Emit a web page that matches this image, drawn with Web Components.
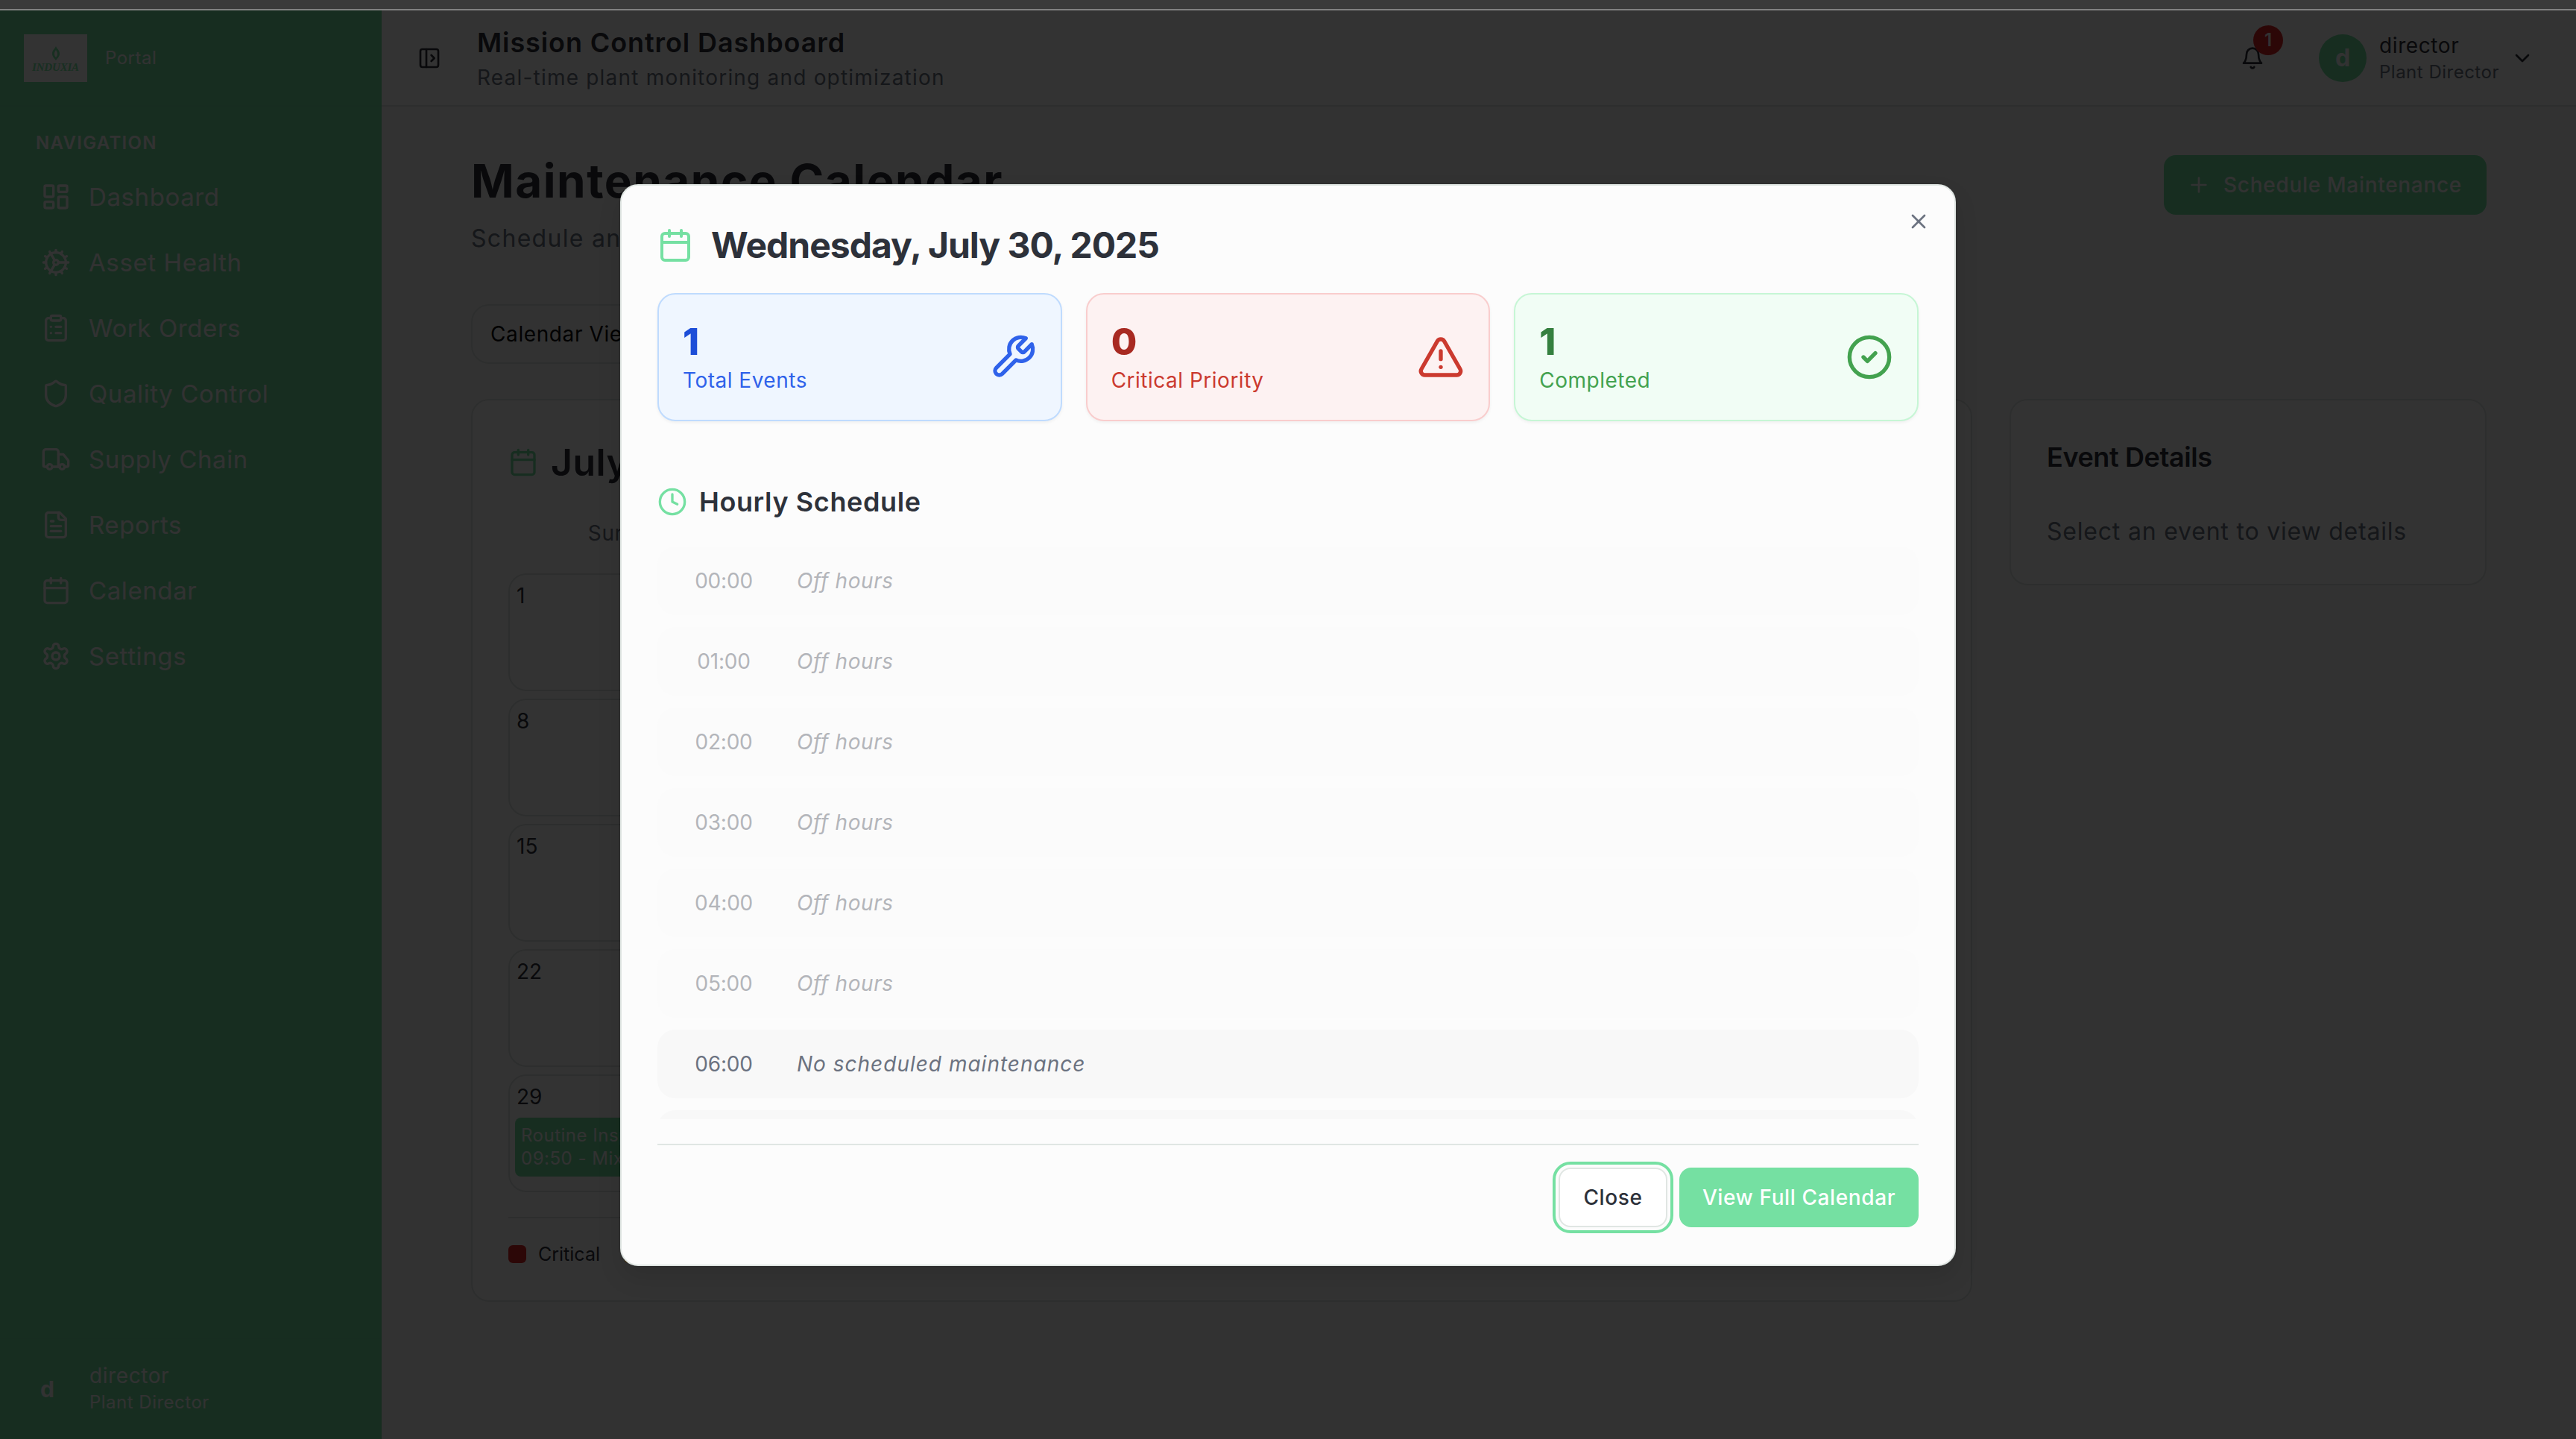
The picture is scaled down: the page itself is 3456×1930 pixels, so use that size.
<!DOCTYPE html>
<html lang="en">
<head>
<meta charset="utf-8">
<title>Mission Control Dashboard</title>
<style>
    html, body { margin: 0; height: 100%; background: #fafafa; overflow: hidden; }
    body { font-family: Inter, "Liberation Sans", sans-serif; color: #2d313a; }
</style>
</head>
<body>
<app-shell></app-shell>
<script>
const ICONS = {
    'layout-dashboard': '<rect x="3" y="3" width="7" height="9" rx="1"/><rect x="14" y="3" width="7" height="5" rx="1"/><rect x="14" y="12" width="7" height="9" rx="1"/><rect x="3" y="16" width="7" height="5" rx="1"/>',
    'cog': '<path d="M12 20a8 8 0 1 0 0-16 8 8 0 0 0 0 16Z"/><path d="M12 14a2 2 0 1 0 0-4 2 2 0 0 0 0 4Z"/><path d="M12 2v2"/><path d="M12 22v-2"/><path d="m17 20.66-1-1.73"/><path d="M11 10.27 7 3.34"/><path d="m20.66 17-1.73-1"/><path d="m3.34 7 1.73 1"/><path d="M14 12h8"/><path d="M2 12h2"/><path d="m20.66 7-1.73 1"/><path d="m3.34 17 1.73-1"/><path d="m17 3.34-1 1.73"/><path d="m11 13.73-4 6.93"/>',
    'clipboard-list': '<rect x="8" y="2" width="8" height="4" rx="1"/><path d="M16 4h2a2 2 0 0 1 2 2v14a2 2 0 0 1-2 2H6a2 2 0 0 1-2-2V6a2 2 0 0 1 2-2h2"/><path d="M12 11h4"/><path d="M12 16h4"/><path d="M8 11h.01"/><path d="M8 16h.01"/>',
    'shield': '<path d="M20 13c0 5-3.5 7.5-7.66 8.95a1 1 0 0 1-.67-.01C7.5 20.5 4 18 4 13V6a1 1 0 0 1 1-1c2 0 4.5-1.2 6.24-2.72a1.17 1.17 0 0 1 1.52 0C14.51 3.81 17 5 19 5a1 1 0 0 1 1 1z"/>',
    'truck': '<path d="M14 18V6a2 2 0 0 0-2-2H4a2 2 0 0 0-2 2v11a1 1 0 0 0 1 1h2"/><path d="M15 18H9"/><path d="M19 18h2a1 1 0 0 0 1-1v-3.65a1 1 0 0 0-.22-.624l-3.48-4.35A1 1 0 0 0 17.52 8H14"/><circle cx="17" cy="18" r="2"/><circle cx="7" cy="18" r="2"/>',
    'file-text': '<path d="M15 2H6a2 2 0 0 0-2 2v16a2 2 0 0 0 2 2h12a2 2 0 0 0 2-2V7Z"/><path d="M14 2v4a2 2 0 0 0 2 2h4"/><path d="M10 9H8"/><path d="M16 13H8"/><path d="M16 17H8"/>',
    'calendar': '<path d="M8 2v4"/><path d="M16 2v4"/><rect x="3" y="4" width="18" height="18" rx="2"/><path d="M3 10h18"/>',
    'settings': '<path d="M12.22 2h-.44a2 2 0 0 0-2 2v.18a2 2 0 0 1-1 1.73l-.43.25a2 2 0 0 1-2 0l-.15-.08a2 2 0 0 0-2.73.73l-.22.38a2 2 0 0 0 .73 2.73l.15.1a2 2 0 0 1 1 1.72v.51a2 2 0 0 1-1 1.74l-.15.09a2 2 0 0 0-.73 2.73l.22.38a2 2 0 0 0 2.73.73l.15-.08a2 2 0 0 1 2 0l.43.25a2 2 0 0 1 1 1.73V20a2 2 0 0 0 2 2h.44a2 2 0 0 0 2-2v-.18a2 2 0 0 1 1-1.73l.43-.25a2 2 0 0 1 2 0l.15.08a2 2 0 0 0 2.73-.73l.22-.39a2 2 0 0 0-.73-2.73l-.15-.08a2 2 0 0 1-1-1.74v-.5a2 2 0 0 1 1-1.74l.15-.09a2 2 0 0 0 .73-2.73l-.22-.38a2 2 0 0 0-2.73-.73l-.15.08a2 2 0 0 1-2 0l-.43-.25a2 2 0 0 1-1-1.73V4a2 2 0 0 0-2-2z"/><circle cx="12" cy="12" r="3"/>',
    'panel-left-open': '<rect x="3" y="3" width="18" height="18" rx="2"/><path d="M9 3v18"/><path d="m14 9 3 3-3 3"/>',
    'bell': '<path d="M6 8a6 6 0 0 1 12 0c0 7 3 9 3 9H3s3-2 3-9"/><path d="M10.3 21a1.94 1.94 0 0 0 3.4 0"/>',
    'chevron-down': '<path d="m6 9 6 6 6-6"/>',
    'plus': '<path d="M5 12h14"/><path d="M12 5v14"/>',
    'x': '<path d="M18 6 6 18"/><path d="m6 6 12 12"/>',
    'wrench': '<path d="M14.7 6.3a1 1 0 0 0 0 1.4l1.6 1.6a1 1 0 0 0 1.4 0l3.77-3.77a6 6 0 0 1-7.94 7.94l-6.91 6.91a2.12 2.12 0 0 1-3-3l6.91-6.91a6 6 0 0 1 7.94-7.94l-3.76 3.76z"/>',
    'triangle-alert': '<path d="m21.73 18-8-14a2 2 0 0 0-3.48 0l-8 14A2 2 0 0 0 4 21h16a2 2 0 0 0 1.73-3"/><path d="M12 9v4"/><path d="M12 17h.01"/>',
    'circle-check': '<circle cx="12" cy="12" r="10"/><path d="m9 12 2 2 4-4"/>',
    'clock': '<circle cx="12" cy="12" r="10"/><polyline points="12 6 12 12 16 14"/>'
};

class UiIcon extends HTMLElement {
    connectedCallback() {
        const size = this.getAttribute('size') || 40;
        const name = this.getAttribute('name');
        this.attachShadow({ mode: 'open' });
        this.shadowRoot.innerHTML = `
            <style>
                :host { display: inline-flex; flex: none; width: ${size}px; height: ${size}px; }
                svg { display: block; }
            </style>
            <svg xmlns="http://www.w3.org/2000/svg" width="${size}" height="${size}" viewBox="0 0 24 24" fill="none"
                stroke="currentColor" stroke-width="2" stroke-linecap="round" stroke-linejoin="round">${ICONS[name]}</svg>
        `;
    }
}
customElements.define('ui-icon', UiIcon);

class NavItem extends HTMLElement {
    connectedCallback() {
        this.attachShadow({ mode: 'open' });
        this.shadowRoot.innerHTML = `
            <style>
                :host { display: flex; align-items: center; gap: 24px; height: 88px; padding-left: 55px; color: #fafafa; }
                span { font-size: 33px; letter-spacing: 0.6px; }
            </style>
            <ui-icon name="${this.getAttribute('icon')}" size="40"></ui-icon>
            <span><slot></slot></span>
        `;
    }
}
customElements.define('nav-item', NavItem);

class SideBar extends HTMLElement {
    connectedCallback() {
        this.attachShadow({ mode: 'open' });
        this.shadowRoot.innerHTML = `
            <style>
                :host { display: flex; flex-direction: column; flex: none; width: 512px; background: #75e0a2; color: #fafafa; }
                .brand { display: flex; align-items: center; gap: 24px; height: 129px; padding: 0 32px; box-sizing: border-box; border-bottom: 2px solid #72dc9e; }
                .logo { width: 85px; height: 64px; background: #fff; display: flex; flex-direction: column; align-items: center; justify-content: center; color: #7ae8a6; }
                .logo svg { display: block; margin-top: 4px; }
                .logo b { font: italic 700 15px/16px "Liberation Serif", serif; letter-spacing: -0.2px; }
                .portal { font-size: 24px; letter-spacing: 0.5px; }
                .label { font-size: 24px; font-weight: 600; letter-spacing: 1.3px; padding: 34px 0 13px 48px; line-height: 30px; }
                nav { flex: 1; }
                .foot { display: flex; align-items: center; gap: 47px; height: 136px; padding: 0 0 0 54px; box-sizing: border-box; border-top: 2px solid #72dc9e; }
                .foot b { font-size: 30px; font-weight: 700; }
                .who { display: flex; flex-direction: column; }
                .who span { font-size: 28px; line-height: 36px; letter-spacing: 0.6px; }
                .who small { font-size: 24px; line-height: 36px; letter-spacing: 0.5px; }
            </style>
            <div class="brand">
                <div class="logo">
                    <svg width="18" height="20" viewBox="0 0 18 20" fill="currentColor"><path d="M9 0c1 3 5 5 5 10 0 4-3 6-5 9-2-3-5-5-5-9 0-5 4-7 5-10zm0 5c-1 2-2 3-2 5s1 4 2 5c1-1 2-3 2-5s-1-3-2-5z"/></svg>
                    <b>INDUXIA</b>
                </div>
                <span class="portal">Portal</span>
            </div>
            <div class="label">NAVIGATION</div>
            <nav>
                <nav-item icon="layout-dashboard">Dashboard</nav-item>
                <nav-item icon="cog">Asset Health</nav-item>
                <nav-item icon="clipboard-list">Work Orders</nav-item>
                <nav-item icon="shield">Quality Control</nav-item>
                <nav-item icon="truck">Supply Chain</nav-item>
                <nav-item icon="file-text">Reports</nav-item>
                <nav-item icon="calendar">Calendar</nav-item>
                <nav-item icon="settings">Settings</nav-item>
            </nav>
            <div class="foot">
                <b>d</b>
                <div class="who"><span>director</span><small>Plant Director</small></div>
            </div>
        `;
    }
}
customElements.define('side-bar', SideBar);

class TopBar extends HTMLElement {
    connectedCallback() {
        this.attachShadow({ mode: 'open' });
        this.shadowRoot.innerHTML = `
            <style>
                :host { display: flex; align-items: center; flex: none; height: 129px; box-sizing: border-box; padding: 0 56px 0 48px; background: #fff; border-bottom: 2px solid #e0e6e3; }
                .titles { flex: 1; margin-left: 48px; }
                h1 { margin: 0; font-size: 36px; line-height: 50px; font-weight: 600; letter-spacing: 0.9px; }
                p { margin: 2px 0 0; font-size: 28px; line-height: 40px; letter-spacing: 1.2px; color: #6b7280; }
                .bell { position: relative; display: flex; margin-right: 73px; }
                .badge { position: absolute; left: 17px; top: -28px; width: 40px; height: 40px; border-radius: 50%; background: #dc2626; color: #fafafa; font-size: 24px; font-weight: 600; display: flex; align-items: center; justify-content: center; }
                .avatar { width: 64px; height: 64px; border-radius: 50%; background: #75e0a2; color: #fafafa; font-size: 32px; font-weight: 700; display: flex; align-items: center; justify-content: center; }
                .who { display: flex; flex-direction: column; width: 176px; margin-left: 17px; }
                .who span { font-size: 28px; line-height: 38px; letter-spacing: 0.6px; }
                .who small { font-size: 24px; line-height: 34px; letter-spacing: 0.5px; color: #6b7280; }
            </style>
            <ui-icon name="panel-left-open" size="32"></ui-icon>
            <div class="titles">
                <h1>Mission Control Dashboard</h1>
                <p>Real-time plant monitoring and optimization</p>
            </div>
            <div class="bell"><ui-icon name="bell" size="32"></ui-icon><span class="badge">1</span></div>
            <div class="avatar">d</div>
            <div class="who"><span>director</span><small>Plant Director</small></div>
            <ui-icon name="chevron-down" size="32"></ui-icon>
        `;
    }
}
customElements.define('top-bar', TopBar);

class CalendarCard extends HTMLElement {
    connectedCallback() {
        const names = ['Sun', 'Mon', 'Tue', 'Wed', 'Thu', 'Fri', 'Sat'];
        let cells = '';
        for (let d = 1; d <= 35; d++) {
            const chip = d === 29 || d === 30
                ? `<div class="chip"><div>Routine Inspection</div><div>09:50 - Mixer 2</div></div>` : '';
            cells += `<div class="cell"><span class="num">${d <= 31 ? d : ''}</span>${chip}</div>`;
        }
        this.attachShadow({ mode: 'open' });
        this.shadowRoot.innerHTML = `
            <style>
                :host { display: block; box-sizing: border-box; height: 1211px; padding: 48px; border: 2px solid #e0e6e3; border-radius: 24px; background: #fff; }
                .head { display: flex; align-items: center; gap: 17px; height: 70px; color: #75e0a2; }
                .head b { font-size: 50px; font-weight: 600; letter-spacing: 0.5px; color: #2d313a; }
                .days, .grid { display: grid; grid-template-columns: repeat(7, 1fr); column-gap: 8px; }
                .days { margin-top: 40px; height: 40px; line-height: 40px; text-align: center; font-size: 28px; letter-spacing: 0.6px; color: #6b7280; }
                .grid { margin-top: 34px; row-gap: 10px; }
                .cell { box-sizing: border-box; height: 158px; padding: 10px 8px; border: 2px solid #e0e6e3; border-radius: 24px; overflow: hidden; }
                .num { display: block; font-size: 28px; line-height: 36px; padding-left: 1px; }
                .chip { margin-top: 10px; margin-left: -1px; height: 79px; padding: 8px; box-sizing: border-box; background: #75e0a2; color: #fafafa; border-radius: 8px; font-size: 24px; line-height: 31px; letter-spacing: 0.5px; white-space: nowrap; overflow: hidden; }
                .legend { display: flex; gap: 32px; margin-top: 33px; padding-top: 36px; border-top: 2px solid #e0e6e3; font-size: 25px; line-height: 24px; }
                .legend span { display: flex; align-items: center; gap: 16px; }
                .legend i { width: 24px; height: 24px; border-radius: 6px; }
            </style>
            <div class="head"><ui-icon name="calendar" size="40"></ui-icon><b>July 2025</b></div>
            <div class="days">${names.map(n => `<span>${n}</span>`).join('')}</div>
            <div class="grid">${cells}</div>
            <div class="legend">
                <span><i style="background:#dc2626"></i>Critical</span>
                <span><i style="background:#f59e0b"></i>High</span>
                <span><i style="background:#3b82f6"></i>Medium</span>
                <span><i style="background:#75e0a2"></i>Low</span>
            </div>
        `;
    }
}
customElements.define('calendar-card', CalendarCard);

class CalendarPage extends HTMLElement {
    connectedCallback() {
        this.attachShadow({ mode: 'open' });
        this.shadowRoot.innerHTML = `
            <style>
                :host { display: block; flex: 1; padding: 60px 120px 0 120px; background: #fafafa; }
                .top { display: flex; justify-content: space-between; align-items: flex-start; height: 205px; }
                h2 { margin: 0; font-size: 62px; line-height: 80px; font-weight: 700; letter-spacing: 1.5px; }
                p { margin: 13px 0 0; font-size: 32px; line-height: 48px; letter-spacing: 1.3px; color: #6b7280; }
                .add { display: flex; align-items: center; gap: 17px; margin-top: 5px; height: 80px; padding: 0 33px 0 31px; background: #75e0a2; color: #fafafa; border-radius: 16px; font-size: 28px; font-weight: 500; letter-spacing: 0.7px; }
                .tabs { box-sizing: border-box; width: 760px; height: 80px; padding: 0 24px; display: flex; align-items: center; gap: 32px; border: 2px solid #e0e6e3; border-radius: 24px; font-size: 28px; letter-spacing: 0.6px; color: #0a0a0a; }
                .cols { display: grid; grid-template-columns: 2014px 640px; gap: 50px; margin-top: 47px; align-items: start; }
                .details { box-sizing: border-box; height: 250px; padding: 49px 48px; border: 2px solid #e0e6e3; border-radius: 24px; background: #fff; }
                h3 { margin: 0; font-size: 36px; line-height: 54px; font-weight: 600; letter-spacing: -0.4px; }
                .details p { margin: 51px 0 0; font-size: 32px; line-height: 44px; letter-spacing: 0.8px; }
            </style>
            <div class="top">
                <div>
                    <h2>Maintenance Calendar</h2>
                    <p>Schedule and manage maintenance activities</p>
                </div>
                <div class="add"><ui-icon name="plus" size="32"></ui-icon>Schedule Maintenance</div>
            </div>
            <div class="tabs"><span>Calendar View</span></div>
            <div class="cols">
                <calendar-card></calendar-card>
                <div class="details">
                    <h3>Event Details</h3>
                    <p>Select an event to view details</p>
                </div>
            </div>
        `;
    }
}
customElements.define('calendar-page', CalendarPage);

class StatCard extends HTMLElement {
    connectedCallback() {
        const a = name => this.getAttribute(name);
        this.attachShadow({ mode: 'open' });
        this.shadowRoot.innerHTML = `
            <style>
                :host { display: flex; align-items: center; justify-content: space-between; padding: 32px; border: 2px solid ${a('line')}; border-radius: 24px; background: ${a('bg')}; box-shadow: 0 2px 4px rgba(0,0,0,.05); }
                b { display: block; font-size: 50px; line-height: 62px; font-weight: 800; color: ${a('strong')}; }
                span { display: block; font-size: 28px; line-height: 42px; letter-spacing: 0.5px; color: ${a('soft')}; }
                ui-icon { color: ${a('soft')}; }
            </style>
            <div><b>${a('value')}</b><span>${a('label')}</span></div>
            <ui-icon name="${a('icon')}" size="64"></ui-icon>
        `;
    }
}
customElements.define('stat-card', StatCard);

class HourRow extends HTMLElement {
    connectedCallback() {
        const off = this.hasAttribute('off');
        this.attachShadow({ mode: 'open' });
        this.shadowRoot.innerHTML = `
            <style>
                :host { display: flex; align-items: center; flex: none; box-sizing: border-box; height: 92px; padding: 0 32px; border-radius: 24px; background: ${off ? '#fbfbfb' : '#f8f8f8'}; font-size: 28px; color: ${off ? '#b3b5ba' : '#6b7280'}; }
                .time { width: 112px; text-align: center; margin-right: 43px; letter-spacing: -0.2px; padding-left: 2px; box-sizing: border-box; }
                em { font-style: italic; letter-spacing: ${off ? 0.6 : 1}px; }
            </style>
            <span class="time">${this.getAttribute('time')}</span>
            <em><slot></slot></em>
        `;
    }
}
customElements.define('hour-row', HourRow);

class DayModal extends HTMLElement {
    connectedCallback() {
        const rows = [];
        for (let h = 0; h < 24; h++) {
            const t = String(h).padStart(2, '0') + ':00';
            const off = h < 6 || h > 20;
            rows.push(`<hour-row time="${t}"${off ? ' off' : ''}>${off ? 'Off hours' : 'No scheduled maintenance'}</hour-row>`);
        }
        this.attachShadow({ mode: 'open' });
        this.shadowRoot.innerHTML = `
            <style>
                :host { display: block; position: relative; box-sizing: border-box; width: 1792px; padding: 48px; background: #fcfcfc; border: 2px solid #e0e6e3; border-radius: 24px; box-shadow: 0 16px 32px rgba(0,0,0,.1); color: #2d313a; }
                .close { position: absolute; top: 32px; right: 32px; color: #6b7280; }
                .title { display: flex; align-items: center; gap: 24px; height: 64px; color: #75e0a2; }
                h2 { margin: 0; font-size: 48px; font-weight: 700; letter-spacing: -1px; color: #2d313a; }
                .stats { display: grid; grid-template-columns: repeat(3, 1fr); gap: 32px; margin-top: 32px; }
                .hourly { display: flex; align-items: center; gap: 16px; height: 56px; margin-top: 80px; color: #75e0a2; }
                h3 { margin: 0; font-size: 36px; font-weight: 600; letter-spacing: 0.6px; color: #2d313a; }
                .list { display: flex; flex-direction: column; gap: 16px; height: 768px; margin-top: 32px; overflow: hidden; }
                .foot { display: flex; justify-content: flex-end; gap: 16px; margin-top: 33px; padding: 30px 0 2px; border-top: 2px solid #e0e6e3; }
                .btn { display: flex; align-items: center; justify-content: center; box-sizing: border-box; height: 80px; border-radius: 16px; font-size: 28px; font-weight: 500; letter-spacing: 0.6px; }
                .ghost { width: 146px; background: #fff; border: 2px solid #e0e6e3; outline: 4px solid #75e0a2; outline-offset: 4px; }
                .solid { width: 321px; background: #75e0a2; color: #fff; }
            </style>
            <ui-icon class="close" name="x" size="32"></ui-icon>
            <div class="title"><ui-icon name="calendar" size="48"></ui-icon><h2>Wednesday, July 30, 2025</h2></div>
            <div class="stats">
                <stat-card value="1" label="Total Events" icon="wrench" bg="#eff6ff" line="#bfdbfe" strong="#1d4ed8" soft="#2f62ea"></stat-card>
                <stat-card value="0" label="Critical Priority" icon="triangle-alert" bg="#fdf2f2" line="#f9cdcd" strong="#a82a22" soft="#cb3a2f"></stat-card>
                <stat-card value="1" label="Completed" icon="circle-check" bg="#f1fdf5" line="#c6f6d5" strong="#35803f" soft="#43a24f"></stat-card>
            </div>
            <div class="hourly"><ui-icon name="clock" size="40"></ui-icon><h3>Hourly Schedule</h3></div>
            <div class="list">${rows.join('')}</div>
            <div class="foot">
                <div class="btn ghost">Close</div>
                <div class="btn solid">View Full Calendar</div>
            </div>
        `;
    }
}
customElements.define('day-modal', DayModal);

class AppShell extends HTMLElement {
    connectedCallback() {
        this.attachShadow({ mode: 'open' });
        this.shadowRoot.innerHTML = `
            <style>
                :host { display: flex; flex-direction: column; height: 1930px; }
                .strip { flex: none; height: 12px; background: #3a3a3a; border-bottom: 2px solid #808080; }
                .body { position: relative; flex: 1; display: flex; min-height: 0; }
                .main { flex: 1; display: flex; flex-direction: column; min-width: 0; }
                .scrim { position: absolute; inset: 0; display: flex; align-items: center; justify-content: center; background: rgba(0,0,0,.8); }
            </style>
            <div class="strip"></div>
            <div class="body">
                <side-bar></side-bar>
                <div class="main">
                    <top-bar></top-bar>
                    <calendar-page></calendar-page>
                </div>
                <div class="scrim"><day-modal></day-modal></div>
            </div>
        `;
    }
}
customElements.define('app-shell', AppShell);
</script>
</body>
</html>
